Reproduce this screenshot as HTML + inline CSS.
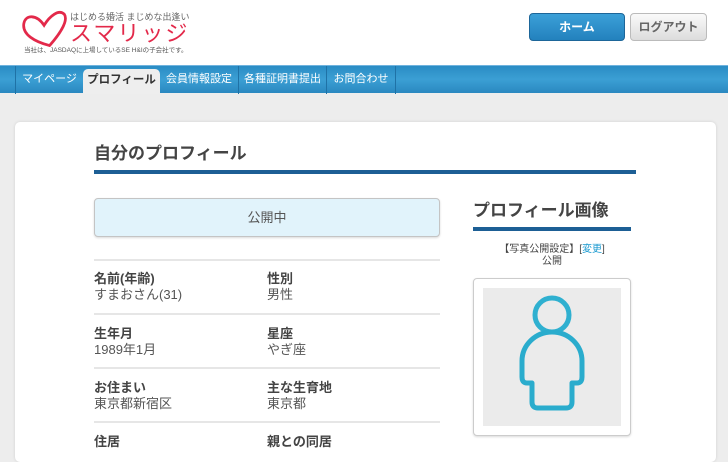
<!DOCTYPE html>
<html><head><meta charset="utf-8"><style>
*{margin:0;padding:0;box-sizing:border-box}
body{width:728px;height:447px;overflow:hidden;background:#ededed;font-family:"Liberation Sans","Noto Sans CJK JP",sans-serif;color:#555;position:relative}
.hdr{position:absolute;left:0;top:0;width:728px;height:65px;background:#fff}
.abs{position:absolute}
.nav{position:absolute;left:0;top:65px;width:728px;height:28px;background:linear-gradient(#2a8cc4,#3b9fd4 50%,#2a88c0);border-top:1px solid #6fb3de}
.tab{position:absolute;top:0;height:28px;color:#fff;font-size:11px;line-height:26px;text-align:center;border-left:1px solid #1f72a6}
.tab.act{background:#eeeeee;color:#333;font-weight:bold;top:3px;height:25px;line-height:22px;border-radius:5px 5px 0 0;border:none;font-size:11.5px}
.card{position:absolute;left:15px;top:122px;width:701px;height:340px;background:#fff;border-radius:5px;box-shadow:0 0 3px rgba(0,0,0,.12)}
.h{font-size:17px;font-weight:bold;color:#444;line-height:20px}
.bar{height:4px;background:#1d5f95}
.line{position:absolute;left:94px;width:346px;height:2px;background:#e6e6e6}
.lb{position:absolute;font-size:13px;font-weight:bold;color:#444;line-height:15px}
.vl{position:absolute;font-size:13px;color:#555;line-height:15px}
</style></head><body>
<div class="hdr">
<svg class="abs" style="left:22px;top:7px" width="46" height="44" viewBox="0 0 50 44"><path d="M30,40 C14,36 0,28 2,16 C4,6 16,6 24,18 C30,8 40,0 46,6 C50,12 44,24 30,40" fill="none" stroke="#e3294a" stroke-width="3" stroke-linecap="round"/></svg>
<div class="abs" style="left:70px;top:12px;font-size:9px;color:#666;line-height:11px">はじめる婚活 まじめな出逢い</div>
<div class="abs" style="left:70px;top:22px;font-size:22px;color:#e3294a;letter-spacing:2px;line-height:24px">スマリッジ</div>
<div class="abs" style="left:24px;top:47px;font-size:6.5px;color:#555;line-height:8px">当社は、JASDAQに上場しているSE H&amp;Iの子会社です。</div>
<div class="abs" style="left:529px;top:13px;width:96px;height:28px;border-radius:4px;background:linear-gradient(#3ba0d8,#2381bd);border:1px solid #1d6699;color:#fff;font-size:12px;font-weight:bold;text-align:center;line-height:26px">ホーム</div>
<div class="abs" style="left:630px;top:13px;width:77px;height:28px;border-radius:4px;background:linear-gradient(#fafafa,#dcdcdc);border:1px solid #bbb;color:#666;font-size:12px;font-weight:bold;text-align:center;line-height:26px">ログアウト</div>
</div>
<div class="nav">
<div class="tab" style="left:15px;width:68px">マイページ</div>
<div class="tab act" style="left:83px;width:77px">プロフィール</div>
<div class="tab" style="left:160px;width:78px;border-left:none">会員情報設定</div>
<div class="tab" style="left:238px;width:88px">各種証明書提出</div>
<div class="tab" style="left:326px;width:69px">お問合わせ</div>
<div class="tab" style="left:395px;width:1px"></div>
</div>
<div class="card"></div>
<div class="abs h" style="left:94px;top:144px">自分のプロフィール</div>
<div class="abs bar" style="left:94px;top:170px;width:542px"></div>
<div class="abs" style="left:94px;top:198px;width:346px;height:39px;background:#e1f3fb;border:1px solid #c4c4c4;border-radius:4px;box-shadow:0 1px 2px rgba(0,0,0,.15);text-align:center;line-height:37px;font-size:13px;color:#555">公開中</div>
<div class="line" style="top:259px"></div>
<div class="lb" style="left:94px;top:271px">名前(年齢)</div><div class="lb" style="left:267px;top:271px">性別</div>
<div class="vl" style="left:94px;top:287px">すまおさん(31)</div><div class="vl" style="left:267px;top:287px">男性</div>
<div class="line" style="top:313px"></div>
<div class="lb" style="left:94px;top:326px">生年月</div><div class="lb" style="left:267px;top:326px">星座</div>
<div class="vl" style="left:94px;top:342px">1989年1月</div><div class="vl" style="left:267px;top:342px">やぎ座</div>
<div class="line" style="top:367px"></div>
<div class="lb" style="left:94px;top:380px">お住まい</div><div class="lb" style="left:267px;top:380px">主な生育地</div>
<div class="vl" style="left:94px;top:396px">東京都新宿区</div><div class="vl" style="left:267px;top:396px">東京都</div>
<div class="line" style="top:421px"></div>
<div class="lb" style="left:94px;top:434px">住居</div><div class="lb" style="left:267px;top:434px">親との同居</div>
<div class="abs h" style="left:473px;top:201px">プロフィール画像</div>
<div class="abs bar" style="left:473px;top:227px;width:158px"></div>
<div class="abs" style="left:473px;top:244px;width:158px;text-align:center;font-size:10px;line-height:12px;color:#444">【写真公開設定】[<span style="color:#1a9ad0">変更</span>]<br>公開</div>
<div class="abs" style="left:473px;top:278px;width:158px;height:158px;border:1px solid #ccc;border-radius:4px;box-shadow:0 1px 2px rgba(0,0,0,.15);background:#fff"></div>
<div class="abs" style="left:483px;top:288px;width:138px;height:138px;background:#ebebeb"></div>
<svg class="abs" style="left:0;top:0" width="728" height="447"><circle cx="552" cy="315" r="17" fill="none" stroke="#2fb0d0" stroke-width="5"/><path d="M532,383 H527 Q522,383 522,377 V361 A30,29 0 0 1 582,361 V377 Q582,383 577,383 H572 V402 Q572,408 566,408 H538 Q532,408 532,402 Z" fill="none" stroke="#2aaccd" stroke-width="5" stroke-linejoin="round"/></svg>
</body></html>
